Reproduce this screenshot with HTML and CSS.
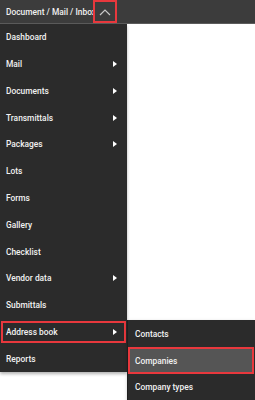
FILE: index.html
```html
<!DOCTYPE html>
<html lang="en">

<head>
    <meta charset="UTF-8">
    <meta name="viewport" content="width=device-width, initial-scale=1.0">
    <title>Document / Mail / Inbox</title>
    <link rel="stylesheet" href="styles.css">
</head>

<body>
    <header class="topbar">
        <div class="crumbs">Document / Mail / Inbox</div>
        <button class="toggle marked">
            <svg width="12" height="8" viewBox="0 0 12 8">
                <path d="M1 7 L6 2 L11 7" fill="none" stroke="#c8c8c8" stroke-width="1.2" />
            </svg>
        </button>
    </header>

    <div class="page">
        <nav class="menu">
            <ul class="menu-list">
                <li class="item">Dashboard</li>
                <li class="item has-sub">Mail</li>
                <li class="item has-sub">Documents</li>
                <li class="item has-sub">Transmittals</li>
                <li class="item has-sub">Packages</li>
                <li class="item">Lots</li>
                <li class="item">Forms</li>
                <li class="item">Gallery</li>
                <li class="item">Checklist</li>
                <li class="item has-sub">Vendor data</li>
                <li class="item">Submittals</li>
                <li class="item has-sub open">
                    <span class="item-box marked">Address book</span>
                    <ul class="submenu">
                        <li class="item">Contacts</li>
                        <li class="item active marked">Companies</li>
                        <li class="item">Company types</li>
                    </ul>
                </li>
                <li class="item">Reports</li>
            </ul>
        </nav>
        <main class="content"></main>
    </div>
</body>

</html>
```

FILE: styles.css
```css
/* base */
body {
    margin: 0;
    font-family: Roboto, "Liberation Sans", sans-serif;
    font-size: 8.4px;
    font-weight: 500;
    color: #f2f2f2;
    background-color: #fff;
    width: 255px;
    height: 400px;
    overflow: hidden;
}

.marked {
    outline: 2px solid #e8383d;
    outline-offset: -2px;
}

/* top bar */
.topbar {
    display: flex;
    align-items: center;
    height: 23px;
    background-color: #3c3c3c;
    border-bottom: 1px solid #5c5c5c;
    padding-left: 6px;
}

.crumbs {
    width: 87px;
    white-space: nowrap;
}

.toggle {
    display: flex;
    align-items: center;
    justify-content: center;
    width: 24px;
    height: 23px;
    padding: 0;
    border: none;
    background-color: #3c3c3c;
    position: relative;
}

/* left menu */
.page {
    display: flex;
}

.menu {
    width: 127px;
    height: 348px;
    background-color: #2b2b2b;
    box-shadow: 0 2px 3px rgba(0, 0, 0, 0.3);
    position: relative;
    z-index: 2;
}

.menu-list,
.submenu {
    list-style: none;
    margin: 0;
    padding: 0;
}

.item {
    position: relative;
    display: flex;
    align-items: center;
    height: 26.77px;
    padding-left: 6px;
    box-sizing: border-box;
}

.has-sub::after {
    content: "";
    position: absolute;
    right: 10px;
    top: 50%;
    margin-top: -3px;
    border-left: 4px solid #fff;
    border-top: 3px solid transparent;
    border-bottom: 3px solid transparent;
}

.open {
    padding: 3px 1px 2px 1px;
}

.item-box {
    display: flex;
    align-items: center;
    width: 100%;
    height: 100%;
    padding-left: 5px;
}

/* sub menu */
.submenu {
    position: absolute;
    left: 128px;
    top: 2px;
    width: 127px;
    background-color: #2b2b2b;
    box-shadow: -1px 0 0 #1e1e1e, 0 2px 4px rgba(0, 0, 0, 0.3);
}

.submenu .item {
    padding-left: 7px;
}

.submenu .active {
    background-color: #555;
    width: 126px;
}

.content {
    flex: 1;
    background-color: #fff;
}
```
